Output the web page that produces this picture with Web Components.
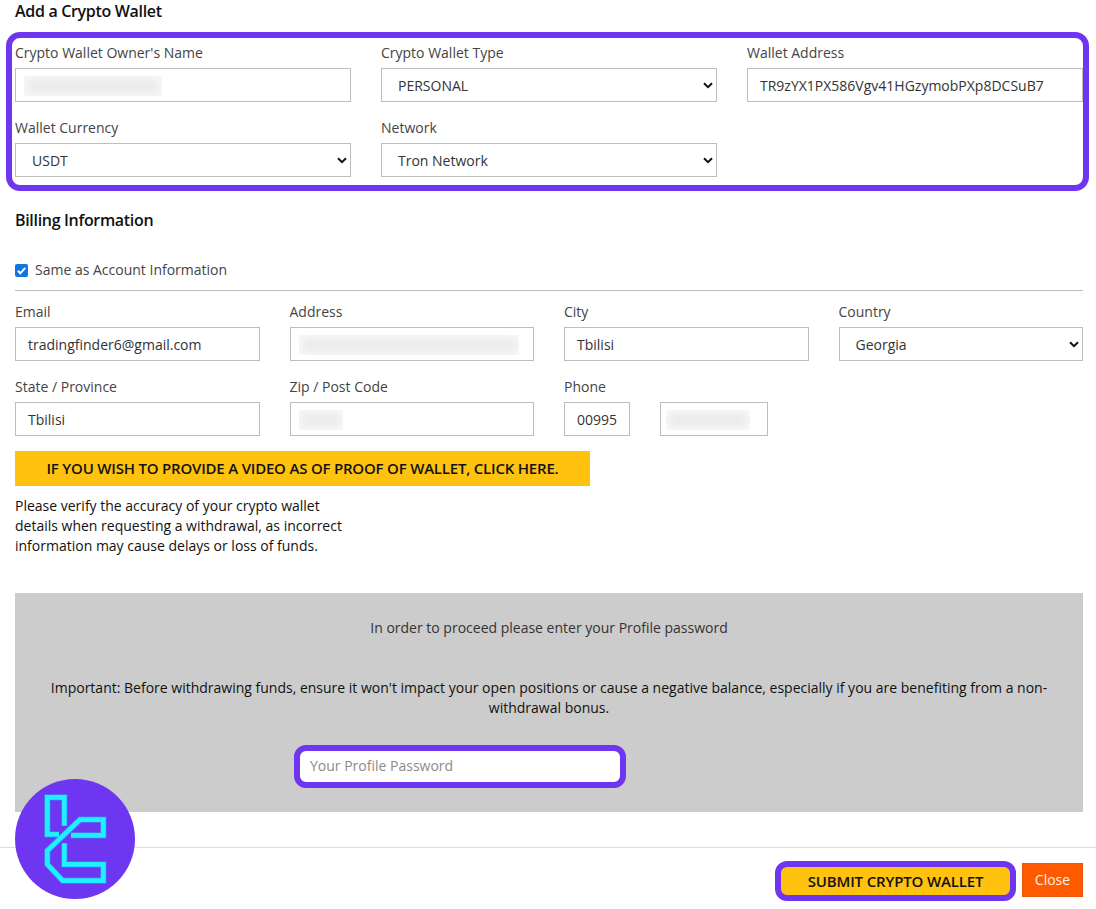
<!DOCTYPE html>
<html lang="en"><head><meta charset="utf-8"><title>Add a Crypto Wallet</title>
<style>
html,body{margin:0;padding:0;background:#fff;height:909px;overflow:hidden}
body{font:14px/20px "Open Sans","Noto Sans",sans-serif;color:#333;position:relative}
wallet-page{display:block}
</style></head><body>
<template id="t-page">
<style>
:host{display:block}
main{padding:0 13px 0 15px}
.grid3{display:grid;grid-template-columns:repeat(3,336px);column-gap:30px;row-gap:16px}
.grid4{display:grid;grid-template-columns:repeat(4,1fr);column-gap:30px;row-gap:16px;margin-top:11px}
.phone{display:flex;gap:30px}
.check{display:flex;align-items:center;gap:7px;margin-top:29px;height:20px;color:#444}
.cb{width:13px;height:13px;border-radius:2px;background:#0f75e0;display:flex}
hr{border:0;border-top:1px solid #bdbdbd;margin:10px 0 0}
.banner{display:flex;align-items:center;justify-content:center;box-sizing:border-box;width:575px;height:35px;margin-top:15px;padding-bottom:2px;background:#ffc20e;color:#111;font-weight:600;font-size:15px;letter-spacing:-.2px}
.note{width:340px;margin:10px 0 0;color:#111;font-weight:500}
.panel{margin-top:37px;background:#ccc;padding:25px 30px 24px;text-align:center;color:#333;height:219px;box-sizing:border-box}
.panel p{margin:0}
.panel .imp{margin-top:40px;color:#111;font-weight:500}
.pw{margin:27px 0 0 249px}
footer{margin-top:35px;border-top:1px solid #ddd;padding:13px 13px 0 0;display:flex;justify-content:flex-end;gap:6px;align-items:flex-start}
</style>
<main>
<section-title>Add a Crypto Wallet</section-title>
<highlight-box>
<div class="grid3">
<form-field label="Crypto Wallet Owner's Name"><text-box blur="138"></text-box></form-field>
<form-field label="Crypto Wallet Type"><select-box>PERSONAL</select-box></form-field>
<form-field label="Wallet Address"><text-box>TR9zYX1PX586Vgv41HGzymobPXp8DCSuB7</text-box></form-field>
<form-field label="Wallet Currency"><select-box>USDT</select-box></form-field>
<form-field label="Network"><select-box>Tron Network</select-box></form-field>
</div>
</highlight-box>
<section-title style="margin-top:18px">Billing Information</section-title>
<div class="check"><span class="cb" role="checkbox" aria-checked="true"><svg width="13" height="13" viewBox="0 0 13 13"><path d="M2.8 6.8 5.3 9.3 10.2 3.9" fill="none" stroke="#fff" stroke-width="2"/></svg></span><span>Same as Account Information</span></div>
<hr>
<div class="grid4">
<form-field label="Email"><text-box>tradingfinder6@gmail.com</text-box></form-field>
<form-field label="Address"><text-box blur="220"></text-box></form-field>
<form-field label="City"><text-box>Tbilisi</text-box></form-field>
<form-field label="Country"><select-box>Georgia</select-box></form-field>
<form-field label="State / Province"><text-box>Tbilisi</text-box></form-field>
<form-field label="Zip / Post Code"><text-box blur="44"></text-box></form-field>
<form-field label="Phone"><div class="phone"><text-box style="width:66px" center>00995</text-box><text-box style="width:108px" blur="84" blurleft="5"></text-box></div></form-field>
</div>
<div class="banner">IF YOU WISH TO PROVIDE A VIDEO AS OF PROOF OF WALLET, CLICK HERE.</div>
<p class="note">Please verify the accuracy of your crypto wallet details when requesting a withdrawal, as incorrect information may cause delays or loss of funds.</p>
<div class="panel">
<p>In order to proceed please enter your Profile password</p>
<p class="imp">Important: Before withdrawing funds, ensure it won't impact your open positions or cause a negative balance, especially if you are benefiting from a non-withdrawal bonus.</p>
<password-box class="pw">Your Profile Password</password-box>
</div>
</main>
<footer>
<action-button kind="submit">SUBMIT CRYPTO WALLET</action-button>
<action-button kind="close">Close</action-button>
</footer>
<logo-badge></logo-badge>
</template>
<script>
function def(name, html, init){
  customElements.define(name, class extends HTMLElement{
    connectedCallback(){
      if(this.shadowRoot) return;
      const r=this.attachShadow({mode:'open'});
      r.innerHTML=html;
      if(init) init(this,r);
    }
  });
}
const chevron='<svg width="10" height="7" viewBox="0 0 10 7"><path d="M1 1.2 5 5.2 9 1.2" fill="none" stroke="#111" stroke-width="2"/></svg>';
def('section-title','<style>:host{display:block;font-size:16px;font-weight:600;line-height:22px;color:#111;letter-spacing:-.32px}</style><slot></slot>');
def('highlight-box','<style>:host{display:block;margin:10px -6px 0 -9px;padding:5px 0 8px 3px;border:6px solid #6f36f2;border-radius:14px}</style><slot></slot>');
def('form-field','<style>:host{display:block;min-width:0}.l{display:block;height:20px;margin-bottom:5px;color:#444}</style><span class="l"></span><slot></slot>',(h,r)=>{r.querySelector('.l').textContent=h.getAttribute('label')});
def('text-box','<style>:host{display:flex;align-items:center;box-sizing:border-box;height:34px;border:1px solid #bdbdbd;background:#fff;padding:2px 12px 0;color:#333;white-space:nowrap;position:relative}:host([center]){justify-content:center;padding:2px 0 0}.b{position:absolute;top:7px;bottom:5px;left:8px;background:#ebebeb;box-shadow:inset 0 0 8px 3px #f8f8f8}</style><slot></slot><span class="b" hidden></span>',(h,r)=>{const w=h.getAttribute('blur');if(w){const b=r.querySelector('.b');b.hidden=false;b.style.width=w+'px';const l=h.getAttribute('blurleft');if(l)b.style.left=l+'px'}});
def('select-box','<style>:host{display:flex;align-items:center;justify-content:space-between;box-sizing:border-box;height:34px;border:1px solid #bdbdbd;background:#fff;padding:2px 3px 0 16px;color:#333}svg{display:block;margin-top:-2px}</style><slot></slot>'+chevron);
def('password-box','<style>:host{display:flex;align-items:center;box-sizing:border-box;width:332px;height:43px;border:6px solid #6f36f2;border-radius:12px;background:#fff;padding:0 10px 2px;color:#8b8b8b;text-align:left}</style><slot></slot>');
def('action-button','<style>:host{display:flex;align-items:center;justify-content:center;box-sizing:border-box}:host([kind=submit]){width:241px;height:40px;border:6px solid #6f36f2;border-radius:12px;background:#ffc20e;color:#111;font-weight:600;font-size:15px;letter-spacing:-.15px}:host([kind=close]){width:61px;height:34px;margin-top:2px;background:#ff5a00;border:1px solid #e9560c;color:#fff3e8}</style><slot></slot>');
def('logo-badge','<style>:host{position:absolute;left:15px;top:779px;width:120px;height:120px;border-radius:50%;background:#6f36f2;display:block}svg{position:absolute;left:20px;top:6px}</style><svg width="80" height="110" viewBox="0 0 240 330" fill="none" stroke-linejoin="miter"><g stroke="#3f7ffb" stroke-width="19"><path d="M72 148H37V37H88V122"/><path d="M88 175V238H205V287H83L37 238V197L135 104H205V151H108"/></g><g stroke="#1ff1ff" stroke-width="14"><path d="M72 148H37V37H88V122"/><path d="M88 175V238H205V287H83L37 238V197L135 104H205V151H108"/></g></svg>');
def('wallet-page','',(h,r)=>{r.appendChild(document.getElementById('t-page').content.cloneNode(true))});
</script>
<wallet-page></wallet-page>
</body></html>
